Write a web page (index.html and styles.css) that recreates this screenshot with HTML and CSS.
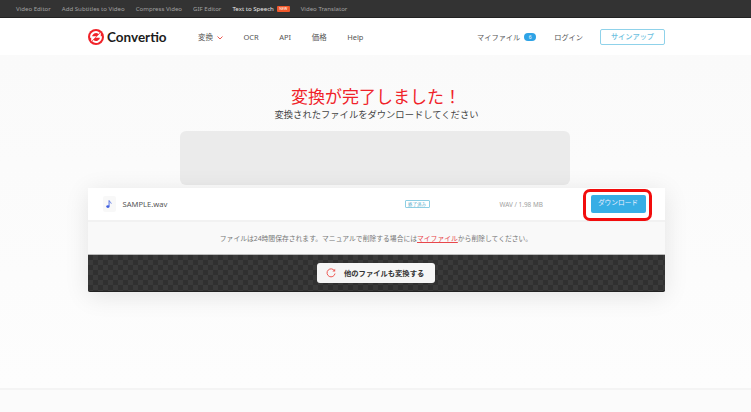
FILE: index.html
```html
<!DOCTYPE html>
<html lang="ja">
<head>
<meta charset="utf-8">
<title>Convertio</title>
<link rel="stylesheet" href="styles.css">
</head>
<body>
<div class="topbar">
  <a>Video Editor</a><a>Add Subtitles to Video</a><a>Compress Video</a><a>GIF Editor</a>
  <a class="on">Text to Speech<span class="new">NEW</span></a><a>Video Translator</a>
</div>
<header class="header">
  <div class="logo">
    <svg width="16" height="16" viewBox="0 0 20 20">
      <circle cx="10" cy="10" r="10" fill="#f0232a"/>
      <path d="M4 11a6 6 0 0 1 10-5.500" fill="none" stroke="#fff" stroke-width="2.400"/>
      <path d="M16 9a6 6 0 0 1-10 5.500" fill="none" stroke="#fff" stroke-width="2.400"/>
      <path d="M9.500 10.800L16 4.500v6.300zM10.500 9.200L4 15.500V9.200z" fill="#fff"/>
    </svg>
    <span>Convertio</span>
  </div>
  <nav class="nav">
    <a class="conv">変換<svg width="6" height="4" viewBox="0 0 6 4"><path d="M.5.500L3 3 5.500.500" fill="none" stroke="#ee5a52" stroke-width="1"/></svg></a>
    <a>OCR</a><a>API</a><a>価格</a><a>Help</a>
  </nav>
  <div class="right">
    <a class="files">マイファイル<span class="count">6</span></a>
    <a class="login">ログイン</a>
    <a class="signup">サインアップ</a>
  </div>
</header>
<main class="main">
  <h1 class="title">変換が完了しました！</h1>
  <p class="sub">変換されたファイルをダウンロードしてください</p>
  <div class="ad"></div>
  <section class="card">
    <div class="row">
      <div class="file">
        <span class="fileicon"><svg width="7" height="9" viewBox="0 0 8 10"><path d="M3.500.5v6.200" stroke="#3f5fe0" stroke-width="1" fill="none"/><path d="M3.500.5c.3 1.500 2.500 1.700 2.500 3.500" stroke="#3f5fe0" stroke-width=".9" fill="none"/><ellipse cx="2.200" cy="7.400" rx="1.900" ry="1.500" fill="#3f5fe0"/></svg></span>
        <span class="name">SAMPLE.wav</span>
      </div>
      <span class="status">終了済み</span>
      <span class="size">WAV / 1.98 MB</span>
      <a class="download">ダウンロード</a>
      <span class="highlight"></span>
    </div>
    <div class="info">ファイルは24時間保存されます。マニュアルで削除する場合には<a>マイファイル</a>から削除してください。</div>
    <div class="dark">
      <a class="again">
        <svg width="10" height="10" viewBox="0 0 10 10"><path d="M8.600 3A4 4 0 1 0 9 5.500" fill="none" stroke="#ee5a55" stroke-width="1"/><path d="M9.200 .8v2.800H6.400z" fill="#ee5a55"/></svg>
        他のファイルも変換する
      </a>
    </div>
  </section>
</main>
<footer class="footer"></footer>
</body>
</html>
```
FILE: styles.css
```css
* { box-sizing: border-box; }
html, body { margin: 0; height: 100%; }
body {
  width: 751px;
  height: 412px;
  overflow: hidden;
  display: flex;
  flex-direction: column;
  background: #fafafa;
  font-family: "Noto Sans", "Noto Sans CJK JP", sans-serif;
  color: #444;
}
.topbar {
  height: 18px;
  flex: none;
  display: flex;
  align-items: center;
  gap: 11px;
  padding: 0 0 1px 16px;
  background: #333;
  border-bottom: 1px solid #222;
  font-size: 6.100px;
  color: #a0a0a0;
  white-space: nowrap;
}
.topbar .on { color: #e8e8e8; }
.new {
  display: inline-block;
  margin-left: 3px;
  padding: 0 2.500px;
  background: #f0582b;
  color: #fff;
  font-size: 3.500px;
  line-height: 6px;
  vertical-align: 1px;
  border-radius: 1px;
}
.header {
  height: 37px;
  flex: none;
  display: flex;
  align-items: center;
  padding: 0 86px 0 88px;
  background: #fff;
  font-size: 7.500px;
  color: #555;
}
.logo {
  display: flex;
  align-items: center;
  gap: 3px;
  width: 110px;
  height: 20px;
}
.logo svg { flex: none; }
.logo span {
  font-family: "Lato", sans-serif;
  font-weight: 700;
  font-size: 13.500px;
  color: #1c1c1c;
}
.nav {
  display: flex;
  align-items: center;
  gap: 20.500px;
}
.conv svg { margin-left: 4px; vertical-align: 0; }
.right {
  margin-left: auto;
  display: flex;
  align-items: center;
  font-size: 7.200px;
}
.files { display: flex; align-items: center; gap: 4px; }
.count {
  width: 12px;
  height: 8px;
  border-radius: 4px;
  background: #2ea3e6;
  color: #fff;
  font-size: 5px;
  line-height: 8px;
  text-align: center;
}
.login { margin-left: 18px; }
.signup {
  width: 65px;
  height: 16px;
  margin-left: 17px;
  border: 1px solid #8fd2ea;
  border-radius: 2px;
  color: #6dbfe0;
  font-weight: 500;
  line-height: 13px;
  text-align: center;
}
.main {
  flex: none;
  height: 333px;
  display: flex;
  flex-direction: column;
  align-items: center;
  background: linear-gradient(#fafafa, #fdfdfd);
}
.title {
  margin: 30px 0 0 1px;
  font-size: 17px;
  line-height: 23px;
  font-weight: 400;
  color: #f0232a;
}
.sub {
  margin: 0 0 0 2px;
  font-size: 9.300px;
  line-height: 14px;
  color: #444;
}
.ad {
  width: 390px;
  height: 54px;
  margin: 9px 1px 0 0;
  background: #ebebeb;
  border-radius: 6px;
}
.card {
  width: 577px;
  height: 104px;
  margin: 3px 0 0 1px;
  display: flex;
  flex-direction: column;
  background: #f9f9f9;
  border-radius: 2px;
  box-shadow: 0 4px 24px rgba(0, 0, 0, .1);
}
.row {
  position: relative;
  height: 34px;
  flex: none;
  display: flex;
  align-items: center;
  padding: 0 19px 0 15px;
  background: #fff;
  border-bottom: 2px solid #f2f2f2;
}
.file {
  width: 302px;
  display: flex;
  align-items: center;
  gap: 7px;
}
.fileicon {
  width: 13px;
  height: 16px;
  display: flex;
  align-items: center;
  justify-content: center;
  background: #f8f8f8;
  border-radius: 2px;
}
.name { font-size: 7.600px; color: #555; }
.status {
  width: 25px;
  height: 8px;
  border: 1px solid #8ecfe4;
  border-radius: 1px;
  font-size: 4.500px;
  line-height: 6px;
  text-align: center;
  color: #5aaecb;
}
.size {
  margin-left: 70px;
  font-size: 6.400px;
  color: #a0a0a0;
  white-space: nowrap;
}
.download {
  width: 55px;
  height: 18px;
  margin-left: auto;
  background: #37aee5;
  border-radius: 2px;
  color: #eef;
  font-size: 6.700px;
  line-height: 15px;
  text-align: center;
}
.highlight {
  position: absolute;
  left: 495px;
  top: 1px;
  width: 69px;
  height: 32px;
  border: 3px solid #f20d0d;
  border-radius: 7px;
}
.info {
  height: 32px;
  flex: none;
  display: flex;
  align-items: center;
  justify-content: center;
  padding-bottom: 1px;
  font-size: 6.800px;
  color: #777;
  white-space: nowrap;
}
.info a {
  color: #e8474c;
  text-decoration: underline;
}
.dark {
  flex: 1;
  display: flex;
  align-items: center;
  justify-content: center;
  background-color: #333;
  background-image: conic-gradient(#3a3a3a 25%, #303030 0 50%, #3a3a3a 0 75%, #303030 0);
  background-size: 10px 10px;
  border-top: 1px solid #bbb;
  border-bottom: 1px solid #222;
  border-radius: 0 0 2px 2px;
}
.again {
  width: 118px;
  height: 20px;
  display: flex;
  align-items: center;
  gap: 8px;
  padding-left: 9px;
  background: #f6f6f6;
  border-radius: 3px;
  font-size: 7.300px;
  font-weight: 700;
  color: #333;
  white-space: nowrap;
}
.footer {
  flex: 1;
  background: #fbfbfb;
  border-top: 2px solid #f4f4f4;
}
```
